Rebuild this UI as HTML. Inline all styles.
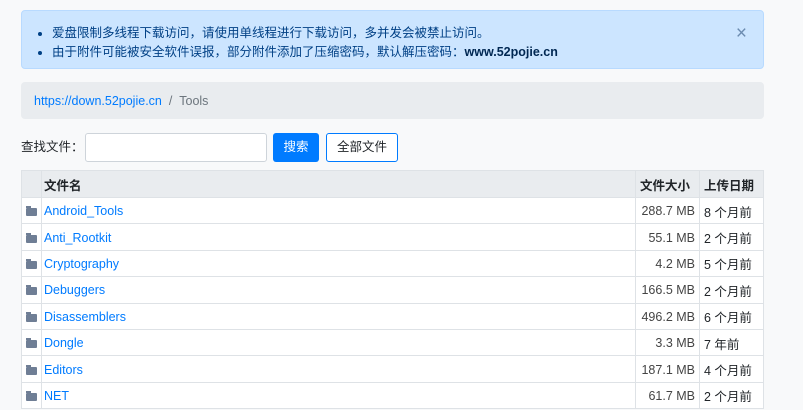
<!DOCTYPE html><html><head><meta charset="utf-8"><style>
body{margin:0;background:#f8f9fa;font-family:"Liberation Sans","Noto Sans CJK SC",sans-serif;font-size:12.5px;color:#212529;width:803px;height:410px;overflow:hidden;position:relative}
.alert{position:absolute;left:21px;top:10px;width:741px;height:57px;background:#cce5ff;border:1px solid #b8daff;border-radius:4px;color:#004085;font-size:12.5px}
.alert ul{margin:0;padding:0 0 0 30px;position:absolute;top:13px;line-height:19px}
.alert b{color:#002752}
.x{position:absolute;right:16px;top:12px;font-size:19px;color:#6b8bb0}
.bc{position:absolute;left:21px;top:82px;width:743px;height:37px;background:#e9ecef;border-radius:4px;line-height:38px;padding-left:13px;box-sizing:border-box;color:#6c757d}
.bc a{color:#007bff;text-decoration:none}
.srch{position:absolute;left:21px;top:133px;height:29px;line-height:29px}
.inp{position:absolute;left:64px;top:0;width:180px;height:27px;background:#fff;border:1px solid #ced4da;border-radius:3px}
.b1{position:absolute;left:252px;top:0;width:46px;height:29px;background:#007bff;color:#fff;border-radius:3px;text-align:center}
.b2{position:absolute;left:305px;top:0;width:70px;height:27px;border:1px solid #007bff;color:#212529;background:#fff;border-radius:3px;text-align:center;line-height:27px}
table{position:absolute;left:21px;top:170px;width:743px;border-collapse:collapse;background:#fff}
td,th{border:1px solid #dee2e6;height:26.4px;padding:1px 4px 0;white-space:nowrap;box-sizing:border-box}
th{background:#e9ecef;text-align:left;font-weight:bold;height:27px}
td.n,th.n{padding-left:2px}
td.n a{color:#007bff}
td.s{text-align:right;color:#444}
.f{display:inline-block;width:11px;height:8px;background:#6f7e95;border-radius:1px;position:relative;top:1px}
.f:before{content:"";position:absolute;left:0;top:-2px;width:5px;height:2px;background:#6f7e95}
</style></head><body>
<div class="alert"><ul><li>爱盘限制多线程下载访问，请使用单线程进行下载访问，多并发会被禁止访问。</li><li>由于附件可能被安全软件误报，部分附件添加了压缩密码，默认解压密码：<b>www.52pojie.cn</b></li></ul><span class="x">×</span></div>
<div class="bc"><a>https://down.52pojie.cn</a>&nbsp; / &nbsp;Tools</div>
<div class="srch">查找文件：<div class="inp"></div><div class="b1">搜索</div><div class="b2">全部文件</div></div>
<table>
<tr><th style="width:18px"></th><th class="n">文件名</th><th style="width:64px">文件大小</th><th style="width:64px">上传日期</th></tr>
<tr><td><span class="f"></span></td><td class="n"><a>Android_Tools</a></td><td class="s">288.7 MB</td><td>8 个月前</td></tr>
<tr><td><span class="f"></span></td><td class="n"><a>Anti_Rootkit</a></td><td class="s">55.1 MB</td><td>2 个月前</td></tr>
<tr><td><span class="f"></span></td><td class="n"><a>Cryptography</a></td><td class="s">4.2 MB</td><td>5 个月前</td></tr>
<tr><td><span class="f"></span></td><td class="n"><a>Debuggers</a></td><td class="s">166.5 MB</td><td>2 个月前</td></tr>
<tr><td><span class="f"></span></td><td class="n"><a>Disassemblers</a></td><td class="s">496.2 MB</td><td>6 个月前</td></tr>
<tr><td><span class="f"></span></td><td class="n"><a>Dongle</a></td><td class="s">3.3 MB</td><td>7 年前</td></tr>
<tr><td><span class="f"></span></td><td class="n"><a>Editors</a></td><td class="s">187.1 MB</td><td>4 个月前</td></tr>
<tr><td><span class="f"></span></td><td class="n"><a>NET</a></td><td class="s">61.7 MB</td><td>2 个月前</td></tr>
</table>
</body></html>
